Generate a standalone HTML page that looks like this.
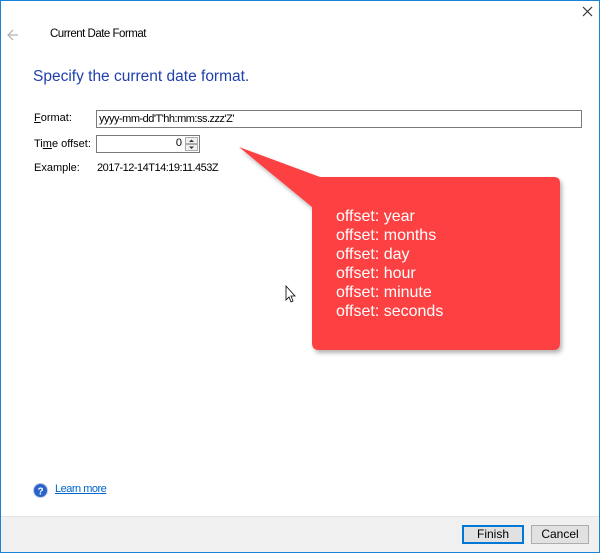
<!DOCTYPE html>
<html><head><style>
*{margin:0;padding:0;box-sizing:border-box}
body{width:600px;height:553px;position:relative;overflow:hidden;background:#fff;font-family:"Liberation Sans",sans-serif;font-size:12px;color:#000}
.win{position:absolute;left:0;top:0;width:600px;height:553px;border:1px solid #1883d7}
.abs{position:absolute}
.footer{position:absolute;left:1px;top:516px;width:598px;height:36px;background:#f0f0f0;border-top:1px solid #e3e3e3}
.btn{position:absolute;top:525px;height:19px;background:#e1e1e1;border:1px solid #adadad;font-size:12px;text-align:center;line-height:16px}
.n{letter-spacing:-0.5px}
</style></head><body>
<div class="win"></div>
<svg class="abs" style="left:7px;top:29px" width="12" height="12"><path d="M11 6H1M6 1L1 6l5 5" stroke="#b0b0b0" stroke-width="1.2" fill="none"/></svg>
<div class="abs n" style="left:50px;top:28px;font-size:11.5px">Current Date Format</div>
<svg class="abs" style="left:582px;top:6px" width="11" height="11"><path d="M1 1L10 10M10 1L1 10" stroke="#333" stroke-width="1.2"/></svg>
<div class="abs" style="left:33px;top:68px;font-size:15.5px;color:#1e3fad">Specify the current date format.</div>
<div class="abs" style="left:34px;top:112px;font-size:11px"><u>F</u>ormat:</div>
<div class="abs n" style="left:96px;top:110px;width:486px;height:18px;border:1px solid #7a7a7a;font-size:11px;padding:1px 2px;line-height:14px">yyyy-mm-dd'T'hh:mm:ss.zzz'Z'</div>
<div class="abs" style="left:34px;top:138px;font-size:11px">Ti<u>m</u>e offset:</div>
<div class="abs" style="left:96px;top:135px;width:104px;height:18px;border:1px solid #7a7a7a;font-size:11px"><span style="position:absolute;right:17px;top:1px">0</span>
<div style="position:absolute;right:1px;top:1px;width:13px;height:7px;border:1px solid #adadad;background:#f0f0f0"></div>
<div style="position:absolute;right:1px;top:8px;width:13px;height:7px;border:1px solid #adadad;background:#f0f0f0"></div>
<svg style="position:absolute;right:3px;top:2px" width="9" height="13"><path d="M2 4l2.5-2.5L7 4zM2 8.5l2.5 2.5L7 8.5z" fill="#333"/></svg></div>
<div class="abs" style="left:34px;top:162px;font-size:11px">Example:</div>
<div class="abs n" style="left:97px;top:162px;font-size:11px">2017-12-14T14:19:11.453Z</div>
<svg class="abs" style="left:0;top:0" width="600" height="553">
<defs><filter id="s" x="-10%" y="-10%" width="130%" height="130%"><feDropShadow dx="2" dy="3" stdDeviation="2" flood-color="#000" flood-opacity="0.3"/></filter></defs>
<path d="M239 147L320 177H554Q560 177 560 183V343Q560 350 554 350H319Q312 350 312 343V207Z" fill="#fd4143" filter="url(#s)"/>
<path d="M286 286v14l3-3 2 5 2-1-2-5h4z" fill="#fff" stroke="#000" stroke-width="0.8"/>
</svg>
<div class="abs" style="left:336px;top:207px;font-size:16px;line-height:19px;color:#fff;font-family:'Liberation Sans',sans-serif">offset: year<br>offset: months<br>offset: day<br>offset: hour<br>offset: minute<br>offset: seconds</div>
<svg class="abs" style="left:33px;top:483px" width="15" height="15"><circle cx="7.5" cy="7.5" r="7" fill="#2a63c8"/><circle cx="7.5" cy="7.5" r="7" fill="none" stroke="#b9c8e8" stroke-width="1"/><text x="7.5" y="11.5" font-size="10" font-weight="bold" fill="#fff" text-anchor="middle" font-family="Liberation Sans">?</text></svg>
<div class="abs n" style="left:55px;top:483px;font-size:11px;color:#0066cc;text-decoration:underline">Learn more</div>
<div class="footer"></div>
<div class="btn" style="left:462px;width:62px;border:2px solid #0078d7;line-height:15px">Finish</div>
<div class="btn" style="left:531px;width:58px">Cancel</div>
</body></html>
